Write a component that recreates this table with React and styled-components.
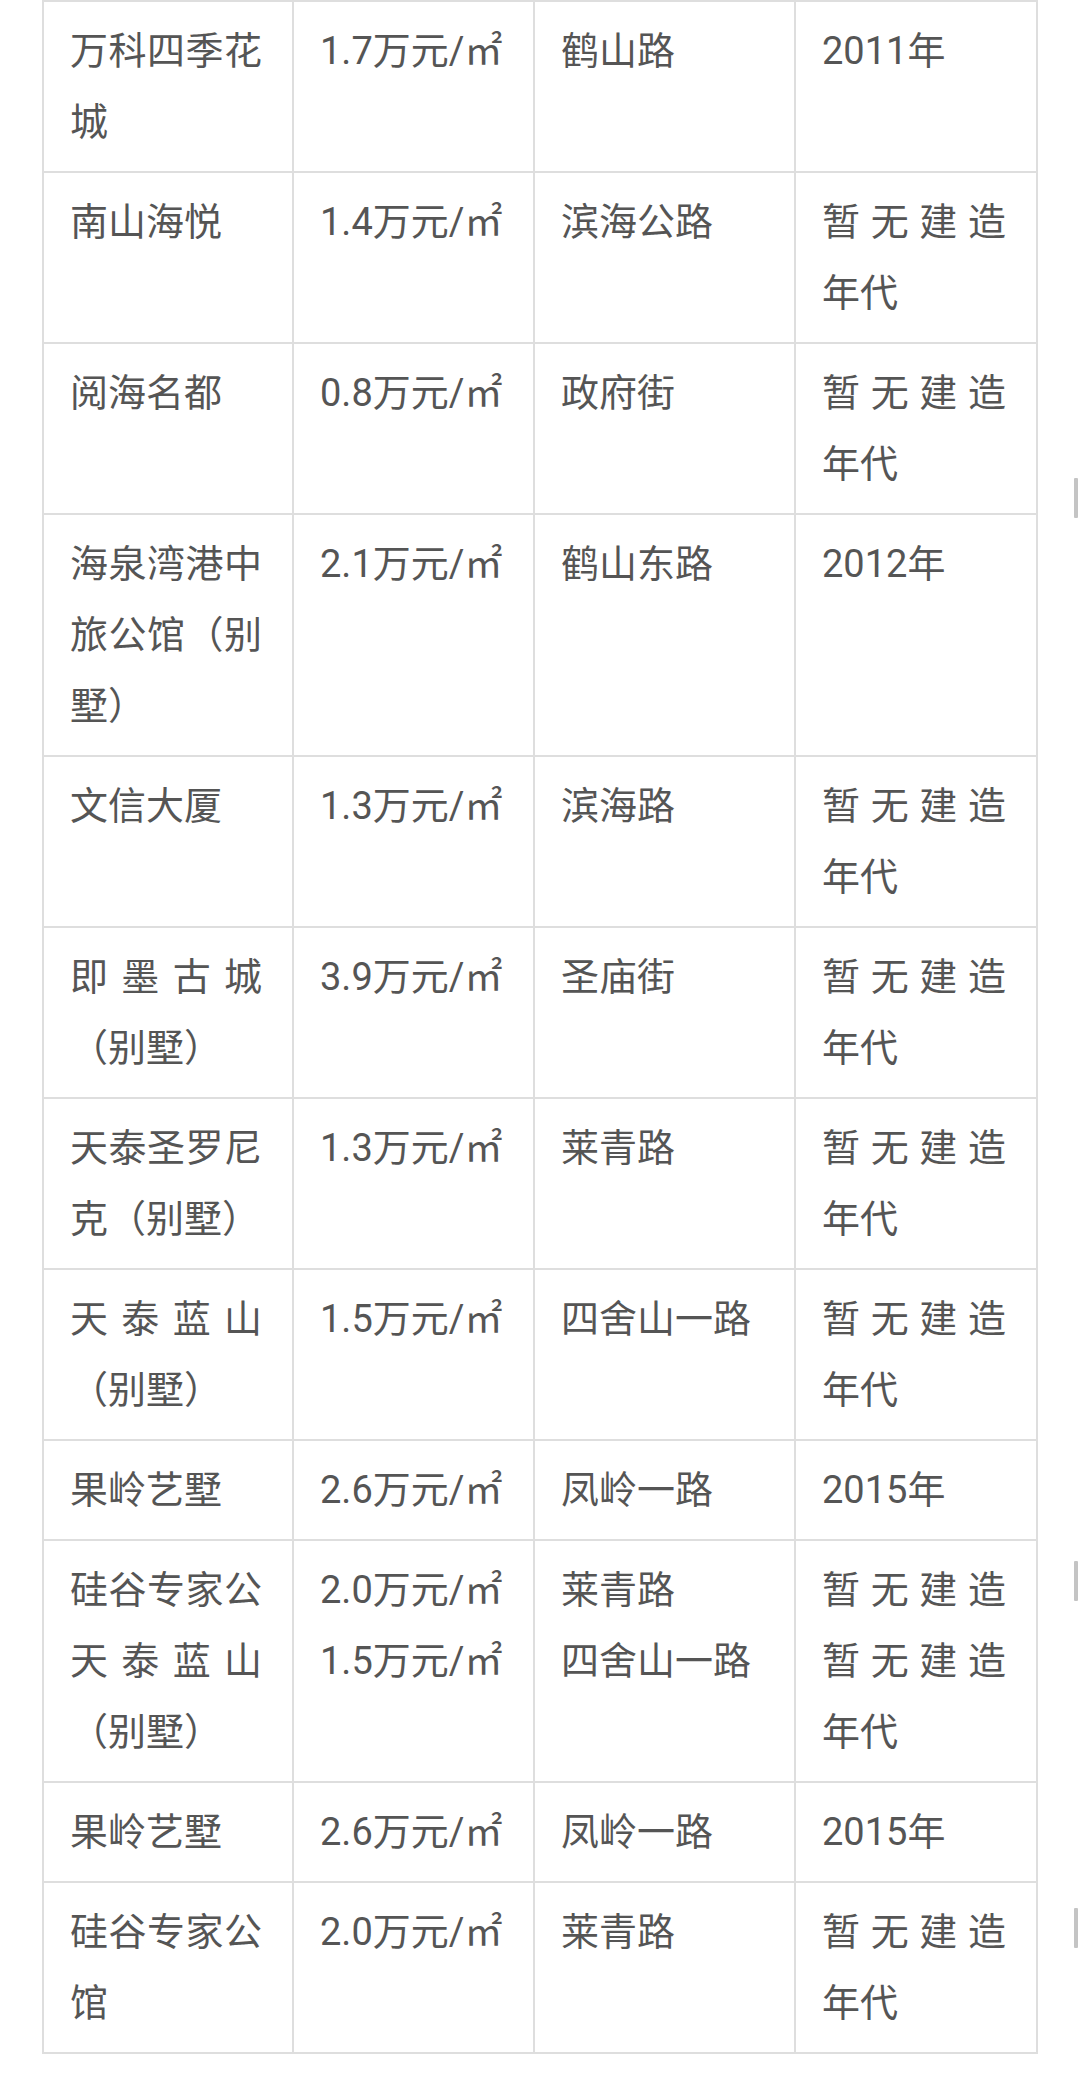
import React from "react";
import styled, { createGlobalStyle } from "styled-components";

const Global = createGlobalStyle`
  html, body { margin: 0; padding: 0; background: #ffffff; }
  body { font-family: Roboto, "Noto Sans CJK SC", sans-serif; }
`;

const Page = styled.div`
  position: relative;
  width: 1080px;
  min-height: 2088px;
  background: #ffffff;
`;

const Table = styled.table`
  margin-left: 42px;
  width: 996px;
  border-collapse: collapse;
  table-layout: fixed;
  color: #555555;
  font-size: 38px;
  line-height: 71px;
`;

const Col = styled.col`
  width: ${(p) => p.$w}px;
`;

const Cell = styled.td`
  border: 2px solid #dedede;
  padding: 14px 30px 13px 26px;
  vertical-align: top;
  text-align: justify;
  word-break: normal;
  white-space: ${(p) => (p.$nowrap ? "nowrap" : "normal")};
`;

const Line = styled.div``;

const ScrollMark = styled.div`
  position: absolute;
  left: 1074px;
  width: 4px;
  height: 40px;
  border-radius: 1px;
  background: #c4c4c4;
`;

const rows = [
  [["万科四季花城"], ["1.7万元/㎡"], ["鹤山路"], ["2011年"]],
  [["南山海悦"], ["1.4万元/㎡"], ["滨海公路"], ["暂无建造年代"]],
  [["阅海名都"], ["0.8万元/㎡"], ["政府街"], ["暂无建造年代"]],
  [["海泉湾港中旅公馆（别墅）"], ["2.1万元/㎡"], ["鹤山东路"], ["2012年"]],
  [["文信大厦"], ["1.3万元/㎡"], ["滨海路"], ["暂无建造年代"]],
  [["即墨古城（别墅）"], ["3.9万元/㎡"], ["圣庙街"], ["暂无建造年代"]],
  [["天泰圣罗尼克（别墅）"], ["1.3万元/㎡"], ["莱青路"], ["暂无建造年代"]],
  [["天泰蓝山（别墅）"], ["1.5万元/㎡"], ["四舍山一路"], ["暂无建造年代"]],
  [["果岭艺墅"], ["2.6万元/㎡"], ["凤岭一路"], ["2015年"]],
  [
    ["硅谷专家公天泰蓝山（别墅）"],
    ["2.0万元/㎡", "1.5万元/㎡"],
    ["莱青路", "四舍山一路"],
    ["暂无建造暂无建造年代"],
  ],
  [["果岭艺墅"], ["2.6万元/㎡"], ["凤岭一路"], ["2015年"]],
  [["硅谷专家公馆"], ["2.0万元/㎡"], ["莱青路"], ["暂无建造年代"]],
];

const widths = [250, 241, 261, 242];

export default function App() {
  return (
    <Page>
      <Global />
      <Table>
        <colgroup>
          {widths.map((w, i) => (
            <Col key={i} $w={w} />
          ))}
        </colgroup>
        <tbody>
          {rows.map((row, r) => (
            <tr key={r}>
              {row.map((lines, c) => (
                <Cell key={c} $nowrap={c === 1}>
                  {lines.map((t, k) => (
                    <Line key={k}>{t}</Line>
                  ))}
                </Cell>
              ))}
            </tr>
          ))}
        </tbody>
      </Table>
      <ScrollMark style={{ top: 478 }} />
      <ScrollMark style={{ top: 1561 }} />
      <ScrollMark style={{ top: 1908 }} />
    </Page>
  );
}
